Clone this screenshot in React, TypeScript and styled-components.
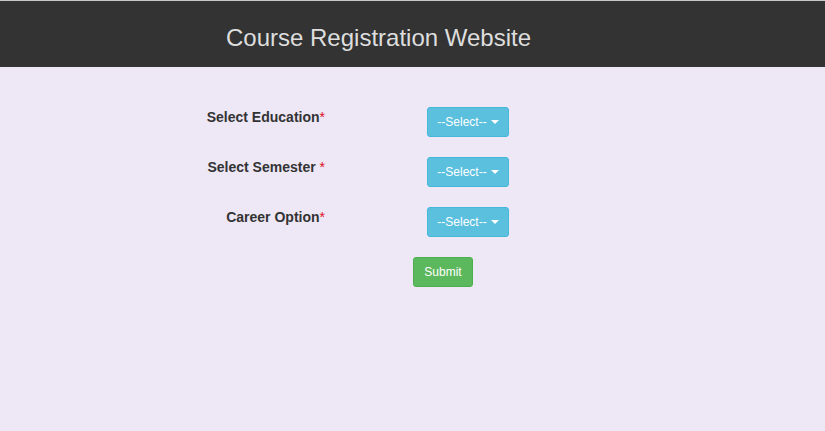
import React from "react";
import styled, { createGlobalStyle } from "styled-components";

const Global = createGlobalStyle`
  html, body { margin: 0; padding: 0; }
  body {
    background: #ede7f6;
    font-family: "Liberation Sans", Arial, sans-serif;
    color: #333;
    width: 825px;
    height: 431px;
    overflow: hidden;
  }
`;

const Header = styled.header`
  background: #333333;
  border-top: 1px solid #c9c9c9;
  display: flex;
  align-items: center;
  padding-left: 226px;
  box-sizing: border-box;
  height: 67px;
`;

const Title = styled.h1`
  margin: 0;
  font-size: 24px;
  font-weight: normal;
  color: #dedede;
  line-height: 1;
  padding-top: 8px;
`;

const Form = styled.form`
  display: grid;
  grid-template-columns: 325px 82px;
  column-gap: 102px;
  row-gap: 20px;
  padding-top: 40px;
`;

const Label = styled.label`
  font-size: 14px;
  font-weight: bold;
  line-height: 20px;
  text-align: right;
  color: #333;
`;

const Req = styled.span`
  color: #e0101a;
  font-weight: normal;
`;

const Btn = styled.button<{ $variant: "info" | "success"; $w: number }>`
  width: ${(p) => p.$w}px;
  height: 30px;
  padding: 5px 0;
  font-family: "Liberation Sans", Arial, sans-serif;
  font-size: 12px;
  line-height: 18px;
  border-radius: 3px;
  color: #fff;
  cursor: pointer;
  display: inline-flex;
  align-items: center;
  justify-content: center;
  white-space: nowrap;
  box-sizing: border-box;
  background: ${(p) => (p.$variant === "info" ? "#5bc0de" : "#5cb85c")};
  border: 1px solid ${(p) => (p.$variant === "info" ? "#46b8da" : "#4cae4c")};
`;

const Caret = styled.span`
  display: inline-block;
  width: 0;
  height: 0;
  margin-left: 4px;
  border-top: 4px solid #fff;
  border-left: 4px solid transparent;
  border-right: 4px solid transparent;
`;

const SubmitCell = styled.div`
  grid-column: 1 / -1;
  padding-left: 413px;
`;

const rows: { label: string; space?: boolean }[] = [
  { label: "Select Education" },
  { label: "Select Semester", space: true },
  { label: "Career Option" },
];

export default function App() {
  return (
    <>
      <Global />
      <Header>
        <Title>Course Registration Website</Title>
      </Header>
      <Form onSubmit={(e) => e.preventDefault()}>
        {rows.map((r) => (
          <React.Fragment key={r.label}>
            <Label>
              {r.label}
              {r.space ? " " : ""}
              <Req>*</Req>
            </Label>
            <div>
              <Btn type="button" $variant="info" $w={82}>
                --Select--
                <Caret />
              </Btn>
            </div>
          </React.Fragment>
        ))}
        <SubmitCell>
          <Btn type="submit" $variant="success" $w={60}>Submit</Btn>
        </SubmitCell>
      </Form>
    </>
  );
}
